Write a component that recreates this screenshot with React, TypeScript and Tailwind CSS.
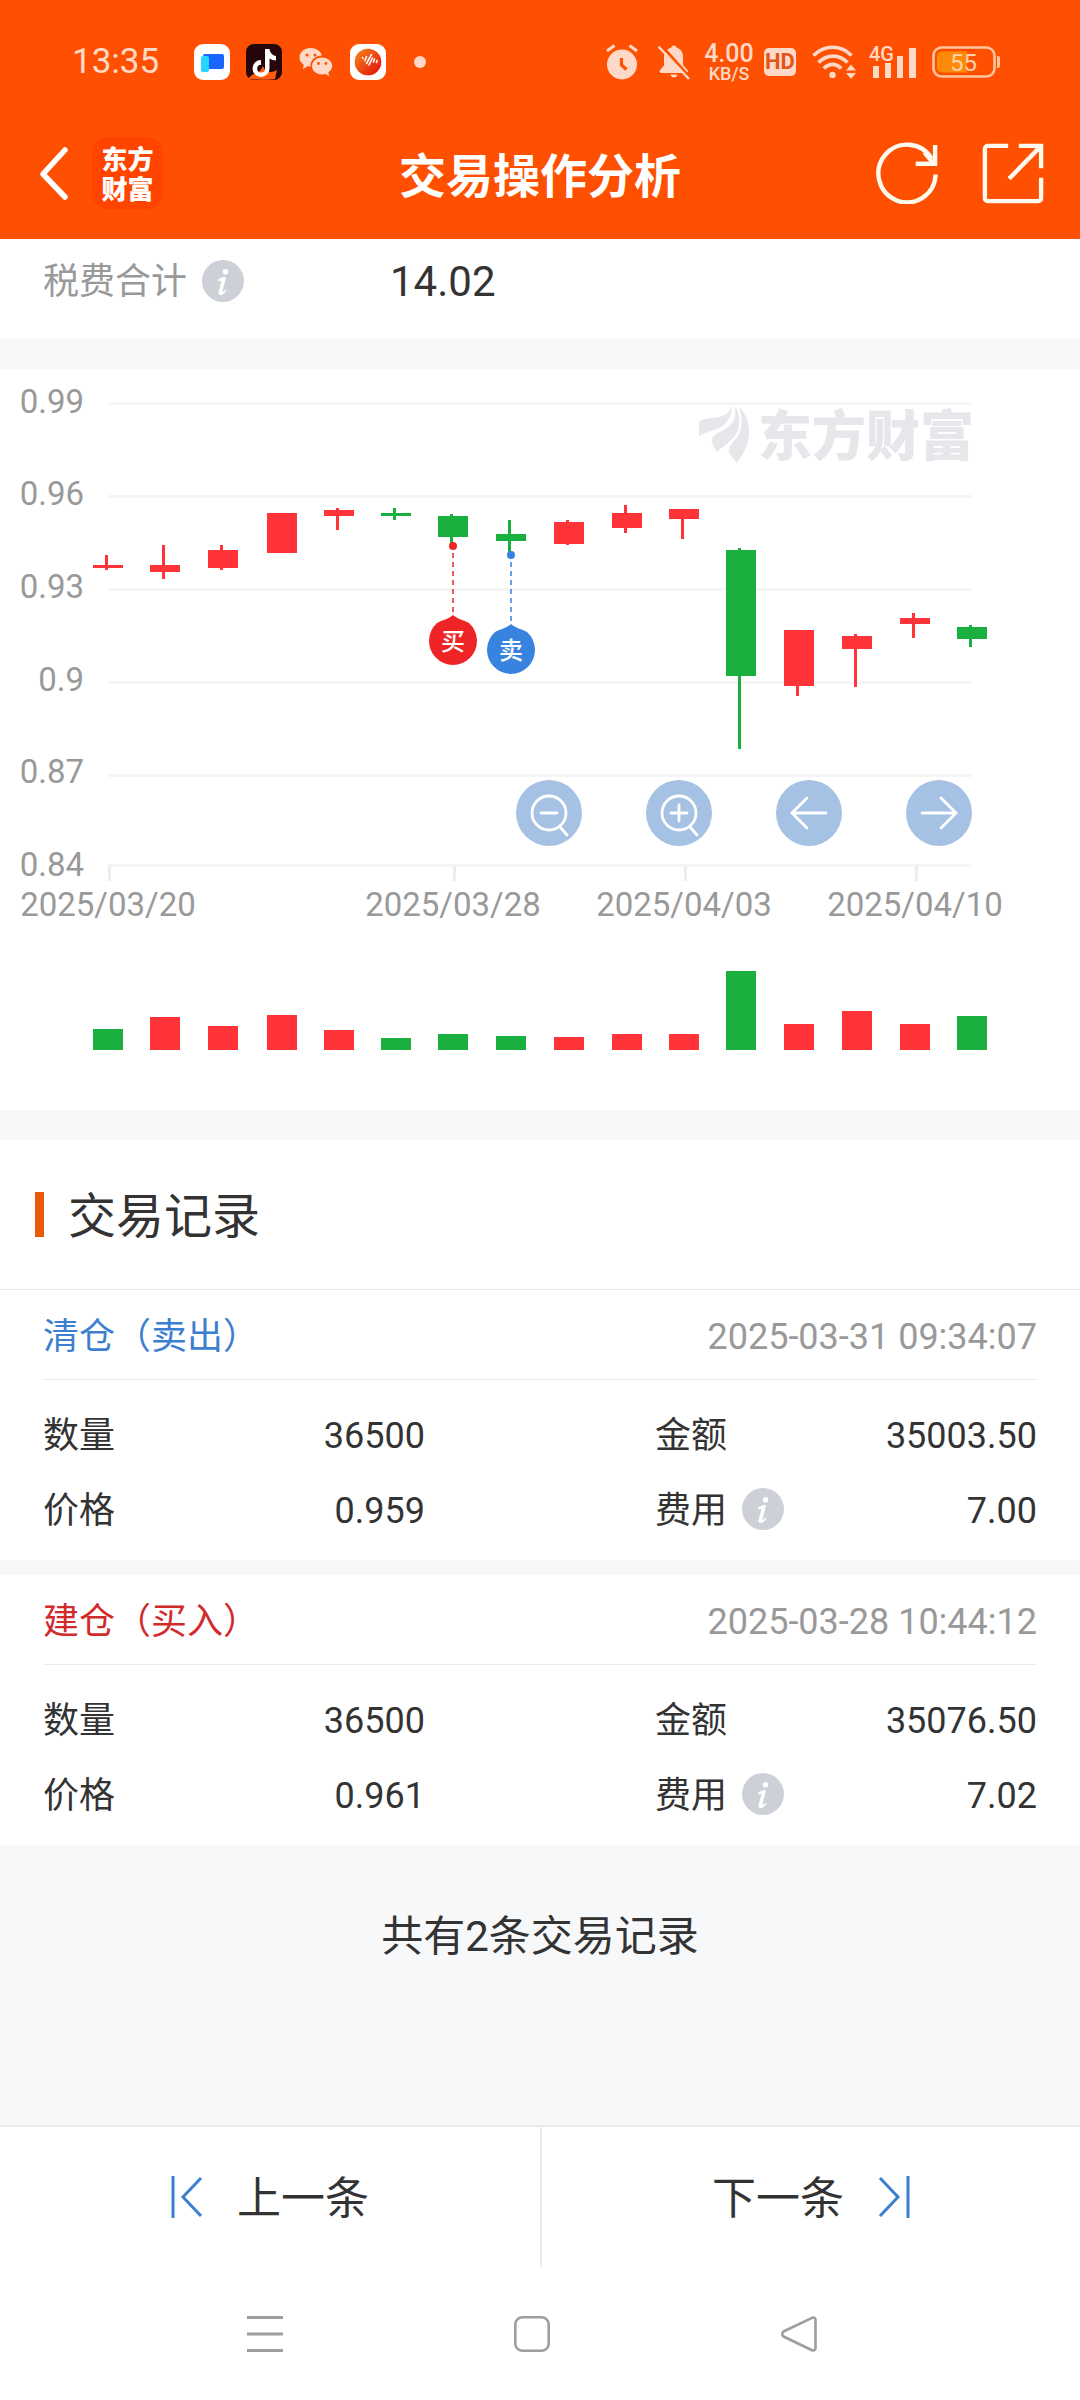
import { ReactNode } from "react";

const RED = "#fe3439";
const GREEN = "#1ab03f";

type Candle = {
    x: number;
    top: number;
    bottom: number;
    high: number;
    low: number;
    vol: number;
    up: boolean;
    volUp?: boolean;
};

// y values are chart units, vol is the height of the volume bar
const candles: Candle[] = [
    { x: 108, top: 196, bottom: 199, high: 186, low: 201, vol: 21, up: true, volUp: false },
    { x: 165, top: 196, bottom: 203, high: 176, low: 210, vol: 33, up: true },
    { x: 223, top: 181, bottom: 199, high: 176, low: 201, vol: 24, up: true },
    { x: 282, top: 144, bottom: 184, high: 144, low: 184, vol: 35, up: true },
    { x: 339, top: 141, bottom: 147, high: 139, low: 161, vol: 20, up: true },
    { x: 396, top: 144, bottom: 147, high: 139, low: 151, vol: 12, up: false },
    { x: 453, top: 147, bottom: 168, high: 145, low: 174, vol: 16, up: false },
    { x: 511, top: 165, bottom: 172, high: 151, low: 183, vol: 14, up: false },
    { x: 569, top: 153, bottom: 175, high: 151, low: 176, vol: 13, up: true },
    { x: 627, top: 144, bottom: 159, high: 136, low: 164, vol: 16, up: true },
    { x: 684, top: 140, bottom: 150, high: 140, low: 170, vol: 16, up: true },
    { x: 741, top: 181, bottom: 307, high: 179, low: 380, vol: 79, up: false },
    { x: 799, top: 261, bottom: 317, high: 261, low: 327, vol: 26, up: true },
    { x: 857, top: 267, bottom: 280, high: 265, low: 318, vol: 39, up: true },
    { x: 915, top: 249, bottom: 255, high: 244, low: 269, vol: 26, up: true },
    { x: 972, top: 258, bottom: 270, high: 256, low: 278, vol: 34, up: false },
];

const priceTicks = [
    { label: "0.99", y: 34, textY: 44 },
    { label: "0.96", y: 127, textY: 136 },
    { label: "0.93", y: 220, textY: 229 },
    { label: "0.9", y: 313, textY: 322 },
    { label: "0.87", y: 406, textY: 414 },
    { label: "0.84", y: 496, textY: 507 },
];

const dateTicks = [
    { label: "2025/03/20", x: 108 },
    { label: "2025/03/28", x: 453 },
    { label: "2025/04/03", x: 684 },
    { label: "2025/04/10", x: 915 },
];

const records = [
    { title: "清仓（卖出）", color: "text-[#3c7fd0]", time: "2025-03-31 09:34:07", qty: "36500", amount: "35003.50", price: "0.959", fee: "7.00" },
    { title: "建仓（买入）", color: "text-[#d12a2a]", time: "2025-03-28 10:44:12", qty: "36500", amount: "35076.50", price: "0.961", fee: "7.02" },
];

function InfoButton() {
    return (
        <button type="button" aria-label="说明" className="shrink-0 pb-[3px]">
            <svg className="w-[42px] h-[42px]" viewBox="0 0 42 42">
                <circle cx="21" cy="21" r="21" fill="#cdd1d7" />
                <circle cx="23.5" cy="11.8" r="2.8" fill="#fff" />
                <path d="M16 19.6c2.600-1.600 5-2.700 6.700-2.800 1.100 0 1.300.9 1 2.200l-3.200 11.800c-.2.9.1 1.200.9.800.8-.4 1.600-1.200 2.400-2l.8.8c-1.800 2.600-4 4.600-6.300 4.600-1.700 0-2.200-1.300-1.700-3.100l2.600-9.800c.3-1.200 0-1.600-1-1.200l-1.700.7z" fill="#fff" />
            </svg>
        </button>
    );
}

function StatusBar() {
    return (
        <div className="h-[107px] pt-[17px] pl-[72px] pr-[80px] flex items-center justify-between text-[#ffd9c7]">
            <div className="flex items-center">
                <span className="w-[122px] text-[35px] leading-[36px]">13:35</span>
                <div className="flex items-center gap-4">
                    <svg className="w-9 h-9" viewBox="0 0 36 36">
                        <rect width="36" height="36" rx="9" fill="#fff" />
                        <rect x="9" y="10" width="21" height="15" rx="2" fill="#1b66ff" />
                        <rect x="7" y="12" width="8" height="16" rx="2" fill="#22d8ff" />
                    </svg>
                    <svg className="w-9 h-9" viewBox="0 0 36 36">
                        <rect width="36" height="36" rx="8" fill="#26060a" />
                        <path d="M2 35c3-4 6-5 9-6 2-1 4-3 6-7 2 4 4 6 8 6 2 0 4-1 6-2l-2 9c-2 1-24 1-27 0z" fill="#ff5a0c" />
                        <path d="M19 5h4.500c.5 4 3 6.500 6.500 7v4.500c-2.400 0-4.600-.8-6.500-2v10a8.500 8.500 0 1 1-8.500-8.500v4.700a3.900 3.900 0 1 0 4 3.800z" fill="#fff" />
                    </svg>
                    <svg className="w-9 h-9" viewBox="0 0 36 36" fill="currentColor">
                        <path d="M12.500 4C6.200 4 1.500 8.200 1.500 13.400c0 3 1.600 5.500 4.200 7.200L5 25l4.600-2.700c1 .2 2 .4 3 .4-.7-6.200 4.200-11 11.300-11.200C22.800 7.200 18.200 4 12.500 4z" />
                        <path d="M24 13.400c-5.600 0-10 3.700-10 8.500s4.400 8.500 10 8.500c1.100 0 2.200-.2 3.200-.5l4 2.100-.9-3.700c2.500-1.600 3.900-3.900 3.900-6.400 0-4.800-4.600-8.500-10.200-8.500z" />
                        <g fill="#fe5000">
                            <circle cx="9" cy="11" r="1.500" />
                            <circle cx="17" cy="11" r="1.500" />
                            <circle cx="20.500" cy="19.500" r="1.400" />
                            <circle cx="28" cy="19.500" r="1.400" />
                        </g>
                    </svg>
                    <svg className="w-9 h-9" viewBox="0 0 36 36">
                        <defs>
                            <linearGradient id="orb" x1="0" y1="0" x2="1" y2="1">
                                <stop offset="0" stopColor="#f58a16" />
                                <stop offset=".5" stopColor="#ee4a14" />
                                <stop offset="1" stopColor="#e40808" />
                            </linearGradient>
                        </defs>
                        <rect width="36" height="36" rx="9" fill="#fff" />
                        <circle cx="18" cy="18" r="13.300" fill="url(#orb)" />
                        <path d="M12.500 13.500l.5 1M16.500 12.500l-1.500 4M21.500 10.500l-5 9M22.500 14l-3.500 7M24.500 15l-1 3M27 16.500l-.5 2" stroke="#fff" strokeWidth="1.600" strokeLinecap="round" />
                    </svg>
                </div>
                <span className="ml-7 w-3 h-3 rounded-full bg-[#ffd9c7]" />
            </div>

            <div className="flex items-center">
                <svg className="w-8 h-9" viewBox="0 0 32 36">
                    <circle cx="16" cy="20.500" r="15" fill="currentColor" />
                    <path d="M1 7l7.500-5.500M31 7l-7.500-5.500" stroke="currentColor" strokeWidth="3" />
                    <path d="M15.500 14v7l5 4.500" fill="none" stroke="#fe5000" strokeWidth="3.200" />
                </svg>
                <svg className="ml-5 w-8 h-9" viewBox="0 0 32 36">
                    <path d="M16 1.500c1.600 0 2.600 1 2.800 2.300 4 1.200 6.200 4.500 6.200 8.700v8.500l4.500 5c.8 1.600 0 3-1.500 3H3.500C2 29 1 27.500 2 26l4-4.500v-9c0-4.200 3-7.700 7-8.700.3-1.300 1.400-2.300 3-2.300zM12.500 30.500h7c-.5 1.700-1.700 3-3.500 3s-3-1.300-3.500-3z" fill="currentColor" />
                    <path d="M3 1l30 34" stroke="#fe5000" strokeWidth="3" />
                    <path d="M.5 2.500L31 35" stroke="currentColor" strokeWidth="2.400" />
                </svg>
                <div className="ml-3 pt-[3px] w-[54px] flex flex-col items-center font-medium">
                    <span className="text-[25px] leading-[20px]">4.00</span>
                    <span className="text-[18px] leading-[20px]">KB/S</span>
                </div>
                <span className="ml-2 w-8 h-7 rounded-[5px] bg-[#ffd9c7] text-[#e2561b] text-[22px] leading-[28px] font-bold text-center">HD</span>
                <svg className="ml-4 w-11 h-9" viewBox="0 0 44 36" fill="none" stroke="currentColor" strokeWidth="3.600">
                    <path d="M1.500 11.500c11-11 27.500-11 38 0M6.500 18.500c8.500-8.500 20.500-8.500 29 0M11.800 24.500c5.400-5.500 12.400-5.500 17.400 0" />
                    <circle cx="20.500" cy="31" r="3.200" fill="currentColor" stroke="none" />
                    <path d="M39 20.500l5 6H34zM39 35l5-6H34z" fill="currentColor" stroke="none" />
                </svg>
                <svg className="ml-[13px] w-12 h-11" viewBox="0 -4 48 44" fill="currentColor">
                    <text x="0" y="17" fontSize="20" fontWeight="500" className="font-['Roboto']">4G</text>
                    <rect x="4" y="22" width="6" height="12" />
                    <rect x="16" y="19" width="6" height="15" />
                    <rect x="28" y="12" width="6" height="22" />
                    <rect x="40" y="4" width="7" height="30" />
                </svg>
                <svg className="ml-[15px] w-[68px] h-8" viewBox="0 0 68 32">
                    <rect x="1.500" y="1.500" width="61" height="29" rx="8" fill="none" stroke="#ffc39f" strokeWidth="2.600" />
                    <path d="M10 5.500h25v21H10a5 5 0 0 1-5-5v-11a5 5 0 0 1 5-5z" fill="#ff8a0a" />
                    <path d="M65 10h1a2 2 0 0 1 2 2v8a2 2 0 0 1-2 2h-1z" fill="#ffc39f" />
                    <text x="31.500" y="25" fontSize="24" textAnchor="middle" fill="#ffd3a8" className="font-['Roboto']">55</text>
                </svg>
            </div>
        </div>
    );
}

function TitleBar() {
    return (
        <div className="h-[132px] px-9 grid grid-cols-[1fr_auto_1fr] items-center">
            <div className="flex items-center gap-6">
                <button type="button" aria-label="返回">
                    <svg className="w-8 h-14" viewBox="0 0 32 56" fill="none" stroke="#fff" strokeWidth="5.500" strokeLinecap="round" strokeLinejoin="round">
                        <path d="M29 5L7 29 29 52" />
                    </svg>
                </button>
                <div className="w-[71px] h-[72px] pt-[3px] rounded-[16px] bg-[#ff4400] text-white font-black text-[26px] leading-[30px] flex flex-col items-center justify-center">
                    <span>东方</span>
                    <span>财富</span>
                </div>
            </div>
            <h1 className="pt-2 text-[47px] leading-[60px] font-bold text-white">交易操作分析</h1>
            <div className="flex items-center justify-end gap-11">
                <button type="button" aria-label="刷新">
                    <svg className="w-[62px] h-[62px]" viewBox="0 0 64 64" fill="none" stroke="#fffaf0" strokeWidth="4.500">
                        <path d="M61.500 33.500A29.500 29.800 0 1 1 57.500 17.500" />
                        <path d="M61 3v19.500H41" />
                        <path d="M59 21.500L50 11" />
                    </svg>
                </button>
                <button type="button" aria-label="分享">
                    <svg className="w-[62px] h-[62px]" viewBox="0 0 64 64" fill="none" stroke="#fffaf0" strokeWidth="4.500">
                        <path d="M27 4H6a3 3 0 0 0-3 3v51a3 3 0 0 0 3 3h52a3 3 0 0 0 3-3V37" strokeLinejoin="round" />
                        <path d="M38 4h23v23M61 4L28 38" />
                    </svg>
                </button>
            </div>
        </div>
    );
}

function ZoomButton({ label, children }: { label: string; children: ReactNode }) {
    return (
        <button type="button" aria-label={label} className="rounded-full bg-[#a5c1e3]">
            <svg className="w-[66px] h-[66px]" viewBox="0 0 66 66" fill="none" stroke="#fff" strokeWidth="2.800" strokeLinecap="round">
                {children}
            </svg>
        </button>
    );
}

function TradePin({ x, y, end, color, text }: { x: number; y: number; end: number; color: string; text: string }) {
    return (
        <g>
            <circle cx={x} cy={y} r="4" fill={color} />
            <path d={`M${x} ${y + 7}V${end}`} stroke={color} strokeWidth="1.500" strokeDasharray="5 4" />
            <path d={`M${x} ${end}c4 4 11 5 16 8a24 24 0 1 1-32 0c5-3 12-4 16-8z`} fill={color} />
            <text x={x} y={end + 35} fontSize="24" fontWeight="500" textAnchor="middle" fill="#fff">{text}</text>
        </g>
    );
}

function Chart() {
    return (
        <section className="relative bg-white">
            <svg className="block w-full h-auto font-['Roboto','Noto_Sans_CJK_SC',sans-serif]" viewBox="0 0 1080 741">
                {priceTicks.map((t) => (
                    <g key={t.label}>
                        <rect x="108" y={t.y - 1} width="864" height="3" fill="#f5f5f5" />
                        <text x="84" y={t.textY} fontSize="33" textAnchor="end" fill="#999">{t.label}</text>
                    </g>
                ))}
                {dateTicks.map((t) => (
                    <g key={t.label}>
                        <rect x={t.x} y="497" width="3" height="15" fill="#eee" />
                        <text x={t.x} y="547" fontSize="33" textAnchor="middle" fill="#999">{t.label}</text>
                    </g>
                ))}

                {/* Watermark */}
                <g fill="#e6e6eb">
                    <path d="M732 37c-3 8-9 11-19 12-8 1-14 1-14 6v12c8-5 17-5 25-11 5-5 8-11 8-19z" />
                    <path d="M735 37c2 14-4 20-13 25-7 3-11 6-10 11 1 4 3 7 5 10 5-5 11-8 17-15 7-9 7-20 1-31z" />
                    <path d="M739 38c5 14 3 25-5 34-4 5-6 7-5 11 1 4 5 7 8 11 7-10 12-19 12-31 0-11-4-20-10-25z" />
                    <text x="758" y="87" fontSize="54" fontWeight="900">东方财富</text>
                </g>

                {candles.map((c) => {
                    const color = c.up ? RED : GREEN;
                    return (
                        <g key={c.x} fill={color}>
                            <rect x={c.x - 15} y={c.top} width="30" height={c.bottom - c.top} />
                            <rect x={c.x - 3} y={c.high} width="3" height={c.low - c.high} />
                            <rect x={c.x - 15} y={681 - c.vol} width="30" height={c.vol} fill={c.volUp ?? c.up ? RED : GREEN} />
                        </g>
                    );
                })}

                <TradePin x={453} y={177} end={246} color="#ee2426" text="买" />
                <TradePin x={511} y={186} end={255} color="#3883e0" text="卖" />
            </svg>

            <div className="absolute right-[10%] top-[55.5%] flex gap-16">
                <ZoomButton label="缩小">
                    <circle cx="33" cy="33" r="17" />
                    <path d="M25 33h16M44 47l7 8" />
                </ZoomButton>
                <ZoomButton label="放大">
                    <circle cx="33" cy="33" r="17" />
                    <path d="M25 33h16M33 25v16M44 47l7 8" />
                </ZoomButton>
                <ZoomButton label="向左">
                    <path d="M50 33H16M31 18L16 33l15 15" />
                </ZoomButton>
                <ZoomButton label="向右">
                    <path d="M16 33h34M35 18l15 15-15 15" />
                </ZoomButton>
            </div>
        </section>
    );
}

function Field({ label, value, info }: { label: string; value: string; info?: boolean }) {
    return (
        <div className="h-[75px] flex items-center justify-between">
            <dt className="flex items-center gap-[15px]">
                {label}
                {info && <InfoButton />}
            </dt>
            <dd>{value}</dd>
        </div>
    );
}

export default function App() {
    return (
        <div className="min-h-screen flex flex-col bg-[#f7f7f7] text-[#333] text-[36px] leading-[48px] font-['Roboto','Noto_Sans_CJK_SC',sans-serif]">
            <header className="bg-[#fe5000]">
                <StatusBar />
                <TitleBar />
            </header>

            <main className="flex-1">
                <section className="h-[100px] px-[43px] pb-[14px] bg-white flex items-center">
                    <div className="w-[347px] flex items-center gap-[15px] text-[#999]">
                        税费合计
                        <InfoButton />
                    </div>
                    <span className="text-[42px]">14.02</span>
                </section>

                <div className="h-[30px]" />
                <Chart />
                <div className="h-[30px]" />

                <section>
                    <div className="h-[150px] pl-[35px] bg-white border-b border-[#ebebeb] flex items-center gap-6">
                        <span className="w-[9px] h-[45px] bg-[#e85a06]" />
                        <h2 className="pt-1 text-[48px] leading-[64px]">交易记录</h2>
                    </div>
                    {records.map((r) => (
                        <article key={r.time} className="mb-[15px] px-[43px] pb-3 bg-white">
                            <div className="h-[90px] pt-1 border-b border-[#ebebeb] flex items-center justify-between">
                                <h3 className={r.color}>{r.title}</h3>
                                <time className="text-[#999]">{r.time}</time>
                            </div>
                            <dl className="pt-[18px] grid grid-cols-2 gap-x-[230px]">
                                <Field label="数量" value={r.qty} />
                                <Field label="金额" value={r.amount} />
                                <Field label="价格" value={r.price} />
                                <Field label="费用" value={r.fee} info />
                            </dl>
                        </article>
                    ))}
                    <p className="h-[150px] pt-1 bg-[#f7f8fa] flex items-center justify-center text-[42px]">共有2条交易记录</p>
                </section>
            </main>

            <footer className="bg-white">
                <div className="grid grid-cols-2 border-t-2 border-[#ebebeb] text-[44px]">
                    <button type="button" className="h-[140px] flex items-center justify-center gap-[34px]">
                        <svg className="w-8 h-[42px]" viewBox="0 0 32 42" fill="none" stroke="#3c7fd0" strokeWidth="3">
                            <path d="M2 0v42M30 2L12 21l18 19" />
                        </svg>
                        <span className="pt-1">上一条</span>
                    </button>
                    <button type="button" className="h-[140px] border-l-2 border-[#ebebeb] flex items-center justify-center gap-[34px]">
                        <span className="pt-1">下一条</span>
                        <svg className="w-8 h-[42px]" viewBox="0 0 32 42" fill="none" stroke="#3c7fd0" strokeWidth="3">
                            <path d="M30 0v42M2 2l18 19L2 40" />
                        </svg>
                    </button>
                </div>
                <nav className="h-[133px] pl-[247px] pr-[263px] flex items-center justify-between text-[#9e9e9e]">
                    <button type="button" aria-label="最近任务">
                        <svg className="w-9 h-9" viewBox="0 0 36 36" stroke="currentColor" strokeWidth="3">
                            <path d="M0 1.500h36M0 18h36M0 34.500h36" />
                        </svg>
                    </button>
                    <button type="button" aria-label="主页">
                        <svg className="w-9 h-9" viewBox="0 0 36 36" fill="none" stroke="currentColor" strokeWidth="2.600">
                            <rect x="1.300" y="1.300" width="33.400" height="33.400" rx="7" />
                        </svg>
                    </button>
                    <button type="button" aria-label="返回">
                        <svg className="w-9 h-9" viewBox="0 0 36 36" fill="none" stroke="currentColor" strokeWidth="2.600">
                            <path d="M31 1.800L2.500 15.500c-1.600 1-1.600 4 0 5L31 34.200c1.800.8 3.500-.2 3.500-2V3.800c0-1.800-1.700-2.800-3.500-2z" />
                        </svg>
                    </button>
                </nav>
            </footer>
        </div>
    );
}
